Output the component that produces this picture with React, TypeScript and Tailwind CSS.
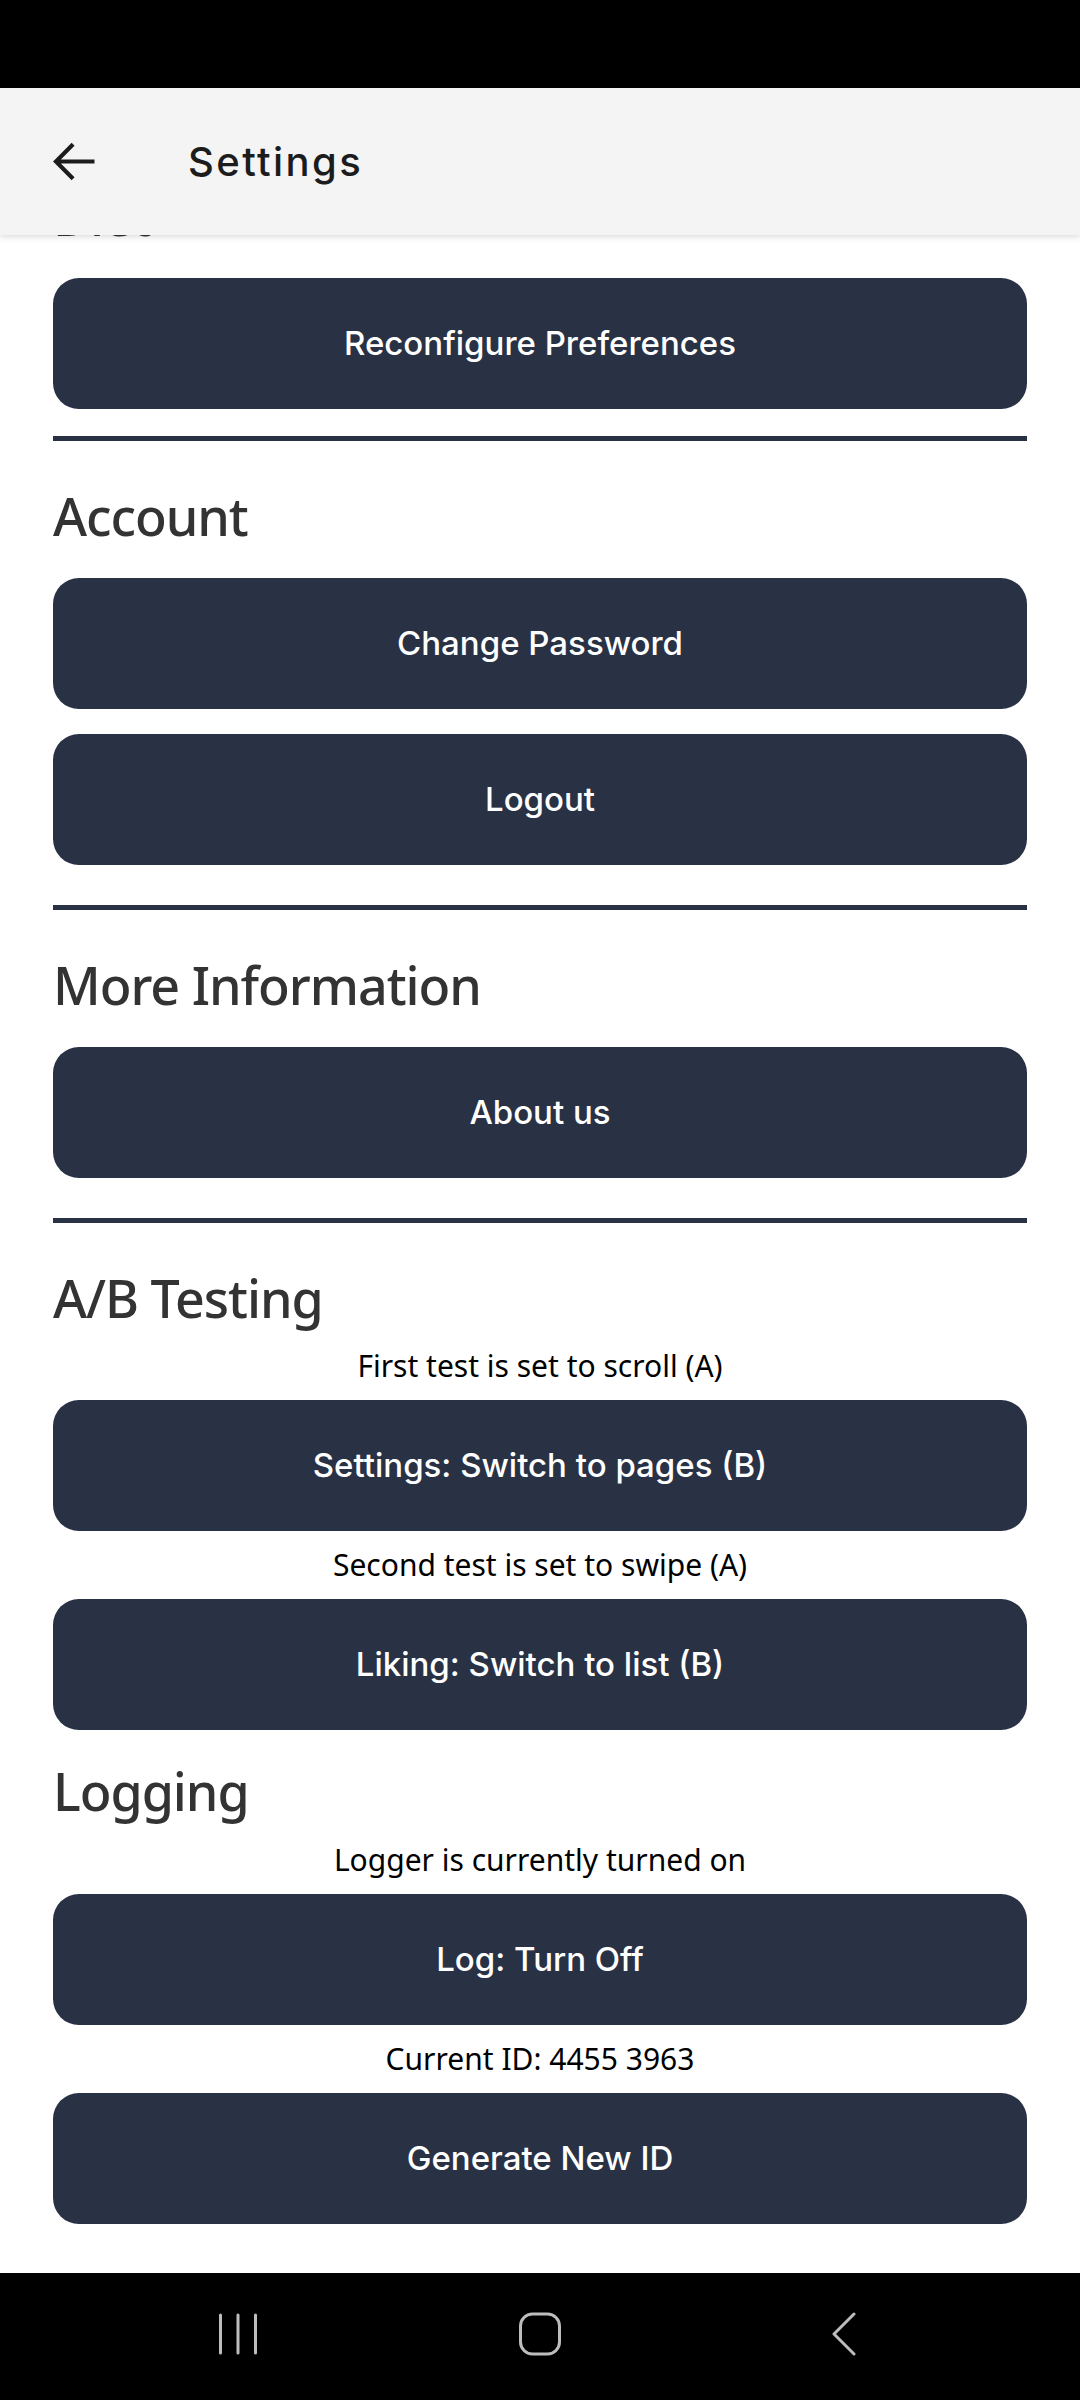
import React from "react";

const HEADING =
  "font-['Noto_Sans',sans-serif] text-[52px] font-medium leading-[60px] tracking-[-0.02em] text-[#333333]";
const LABEL = "text-center font-['Noto_Sans',sans-serif] text-[30px] leading-[36px] text-black";

function Btn({ children, className = "" }: { children: React.ReactNode; className?: string }) {
  return (
    <button
      className={`flex h-[131px] w-full items-center justify-center rounded-[26px] bg-[#293145] font-['Inter',sans-serif] text-[33px] font-medium text-white ${className}`}
    >
      {children}
    </button>
  );
}

function Divider({ className = "" }: { className?: string }) {
  return <div className={`h-[5px] w-full bg-[#293145] ${className}`} />;
}

export default function App() {
  return (
    <div className="flex h-[2400px] w-[1080px] flex-col overflow-hidden bg-white">
      {/* status bar */}
      <div className="h-[88px] shrink-0 bg-black" />

      <main className="relative flex-1 overflow-hidden">
        {/* app bar over the scrolled list */}
        <header className="absolute inset-x-0 top-0 z-10 flex h-[147px] items-center bg-[#f4f4f4] pl-[42px] shadow-[0_2px_6px_rgba(0,0,0,0.14)]">
          <svg width="63" height="63" viewBox="0 0 24 24" fill="#1c1c1c">
            <path d="M20 11.2H7.2l5.2-5.2-1.1-1.1L4.2 12l7.1 7.1 1.1-1.1-5.2-5.2H20v-1.6z" />
          </svg>
          <h1 className="ml-[83px] font-['Inter',sans-serif] text-[40px] font-medium tracking-[0.06em] text-[#1c1c1c]">
            Settings
          </h1>
        </header>

        <div className="px-[53px] pt-[98px]">
          <h2 className={HEADING}>Diet</h2>
          <Btn className="mt-[32px]">Reconfigure Preferences</Btn>
          <Divider className="mt-[27px]" />

          <h2 className={`mt-[45px] ${HEADING}`}>Account</h2>
          <div className="mt-[32px] flex flex-col gap-[25px]">
            <Btn>Change Password</Btn>
            <Btn>Logout</Btn>
          </div>
          <Divider className="mt-[40px]" />

          <h2 className={`mt-[45px] ${HEADING}`}>More Information</h2>
          <Btn className="mt-[32px]">About us</Btn>
          <Divider className="mt-[40px]" />

          <h2 className={`mt-[45px] ${HEADING}`}>A/B Testing</h2>
          <p className={`mt-[20px] ${LABEL}`}>First test is set to scroll (A)</p>
          <Btn className="mt-[16px]">Settings: Switch to pages (B)</Btn>
          <p className={`mt-[16px] ${LABEL}`}>Second test is set to swipe (A)</p>
          <Btn className="mt-[16px]">Liking: Switch to list (B)</Btn>

          <h2 className={`mt-[31px] ${HEADING}`}>Logging</h2>
          <p className={`mt-[21px] ${LABEL}`}>Logger is currently turned on</p>
          <Btn className="mt-[16px]">Log: Turn Off</Btn>
          <p className={`mt-[16px] ${LABEL}`}>Current ID: 4455 3963</p>
          <Btn className="mt-[16px]">Generate New ID</Btn>
        </div>
      </main>

      {/* system nav bar */}
      <nav className="flex h-[127px] shrink-0 items-center justify-center gap-[242px] bg-black pb-[6px]">
        <svg width="60" height="44" viewBox="0 0 60 44" fill="none" stroke="#bdbdbd" strokeWidth="3" strokeLinecap="round">
          <path d="M12.5 3v38M30 3v38M47.5 3v38" />
        </svg>
        <svg width="60" height="44" viewBox="0 0 60 44" fill="none" stroke="#bdbdbd" strokeWidth="3">
          <rect x="10.5" y="2" width="39" height="40" rx="12" />
        </svg>
        <svg width="60" height="44" viewBox="0 0 60 44" fill="none" stroke="#bdbdbd" strokeWidth="3" strokeLinecap="round" strokeLinejoin="round">
          <path d="M42 2L22 22l20 20" />
        </svg>
      </nav>
    </div>
  );
}
